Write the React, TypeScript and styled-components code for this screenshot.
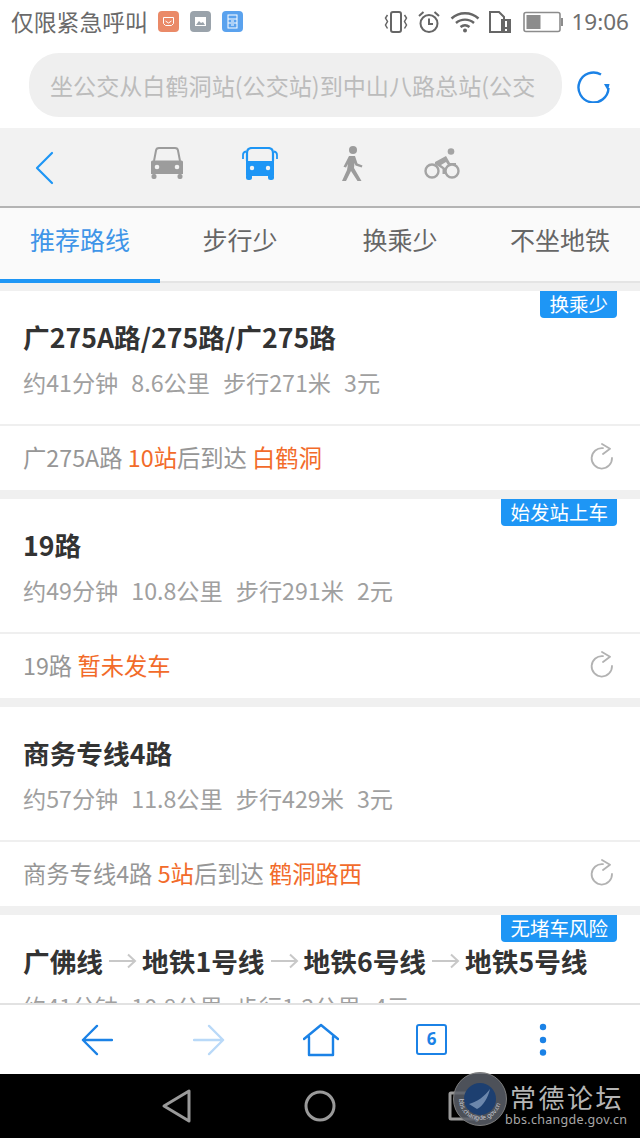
import styled, { createGlobalStyle } from "styled-components";

const GlobalStyle = createGlobalStyle`
  html, body { margin: 0; padding: 0; background: #fff; }
  body { font-family: "Noto Sans CJK SC", "Noto Sans", sans-serif; }
  * { box-sizing: border-box; }
`;

const BLUE = "#1e96f5";
const ORANGE = "#f26b2a";

const Page = styled.div`
  width: 640px;
  height: 1138px;
  display: flex;
  flex-direction: column;
  overflow: hidden;
`;

const StatusBar = styled.div`
  height: 46px;
  flex: none;
  display: flex;
  align-items: center;
  padding: 0 11px 3px 11px;
  color: #6a6a6a;
`;

const StatusText = styled.span`
  font-size: 22.8px;
  line-height: 30px;
  white-space: nowrap;
`;

const Notes = styled.div`
  display: flex;
  gap: 11px;
  margin-left: 10px;
  flex: 1;
`;

const NoteIcon = styled.div<{ $bg: string }>`
  width: 21px;
  height: 21px;
  border-radius: 4px;
  background: ${(p) => p.$bg};
  display: flex;
  align-items: center;
  justify-content: center;
`;

const StatusIcons = styled.div`
  display: flex;
  align-items: center;
  gap: 9px;
`;

const Clock = styled.span`
  font-family: "Noto Sans", sans-serif;
  font-size: 22.5px;
  line-height: 30px;
  color: #6e6e6e;
  margin-left: -2px;
`;

const SearchRow = styled.div`
  height: 82px;
  flex: none;
  display: flex;
  align-items: flex-start;
  padding: 7px 0 0 29px;
  background: #fff;
`;

const SearchBox = styled.div`
  width: 533px;
  height: 64px;
  border-radius: 30px;
  background: #efefef;
  color: #bcbcbc;
  font-size: 23.1px;
  line-height: 64px;
  padding-left: 21px;
  white-space: nowrap;
  overflow: hidden;
`;

const RefreshWrap = styled.div`
  margin: 16px 0 0 15px;
  width: 34px;
  height: 34px;
`;

const ModeBar = styled.div`
  height: 80px;
  flex: none;
  background: #f2f2f2;
  border-bottom: 2px solid #b4b4b4;
  display: flex;
  align-items: center;
`;

const BackSlot = styled.div`
  width: 120px;
  flex: none;
  padding: 2px 0 0 34px;
  display: flex;
`;

const ModeSlot = styled.div<{ $w: number }>`
  width: ${(p) => p.$w}px;
  flex: none;
  display: flex;
  justify-content: center;
  padding-bottom: 6px;
`;

const Tabs = styled.div`
  height: 75px;
  flex: none;
  display: flex;
  background: #fafafa;
  border-bottom: 2px solid #e4e4e4;
`;

const Tab = styled.div<{ $active?: boolean }>`
  width: 160px;
  height: 75px;
  text-align: center;
  font-size: 25px;
  line-height: 62px;
  color: ${(p) => (p.$active ? "#3f95e8" : "#666")};
  border-bottom: 4px solid ${(p) => (p.$active ? BLUE : "transparent")};
`;

const List = styled.div`
  flex: 1;
  min-height: 0;
  overflow: hidden;
  background: #f0f0f0;
  padding-top: 8px;
  display: flex;
  flex-direction: column;
  gap: 9px;
`;

const Card = styled.div`
  flex: none;
  height: 199px;
  background: #fff;
  position: relative;
`;

const Badge = styled.div`
  position: absolute;
  top: 0;
  right: 23px;
  height: 27px;
  padding: 0 9px;
  background: ${BLUE};
  color: #fff;
  font-size: 19.5px;
  line-height: 25px;
  border-radius: 0 0 4px 4px;
`;

const CardMain = styled.div`
  height: 135px;
  padding: 27px 0 0 23px;
  border-bottom: 2px solid #efefef;
`;

const Title = styled.div`
  display: flex;
  align-items: center;
  height: 38px;
  font-size: 26.7px;
  line-height: 38px;
  font-weight: 700;
  color: #333;
  white-space: nowrap;
`;

const Meta = styled.div`
  display: flex;
  gap: 13px;
  margin-top: 10px;
  font-size: 23.2px;
  line-height: 32px;
  color: #a0a0a0;
  white-space: nowrap;
`;

const Arrow = styled.span`
  display: flex;
  width: 39px;
  justify-content: center;
`;

const CardFoot = styled.div`
  height: 64px;
  display: flex;
  align-items: center;
  justify-content: space-between;
  padding: 0 26px 3px 23px;
  font-size: 23.3px;
  color: #969696;
  white-space: nowrap;
`;

const Hot = styled.span`
  color: ${ORANGE};
`;

const BottomBar = styled.div`
  height: 71px;
  flex: none;
  background: #fff;
  border-top: 2px solid #e2e2e2;
  display: flex;
  align-items: center;
  padding-left: 41px;
`;

const BottomSlot = styled.div<{ $w: number }>`
  width: ${(p) => p.$w}px;
  flex: none;
  display: flex;
  justify-content: center;
`;

const TabCount = styled.div`
  width: 31px;
  height: 31px;
  border: 2.5px solid #1b82e6;
  border-radius: 3px;
  color: #1b82e6;
  font-size: 17px;
  font-weight: 700;
  line-height: 26px;
  text-align: center;
  font-family: "Noto Sans", sans-serif;
`;

const NavBar = styled.div`
  height: 64px;
  flex: none;
  background: #000;
  position: relative;
  display: flex;
  align-items: center;
  padding-left: 161px;
`;

const Watermark = styled.div`
  position: absolute;
  left: 453px;
  top: -2px;
  width: 187px;
  height: 58px;
`;

const Seal = styled.div`
  position: absolute;
  left: 0;
  top: 0;
  width: 54px;
  height: 54px;
`;

const WmTitle = styled.div`
  position: absolute;
  left: 57px;
  top: 10px;
  font-family: "Noto Sans CJK SC", serif;
  font-size: 26px;
  line-height: 29px;
  letter-spacing: 2.5px;
  color: #b5b5b5;
  white-space: nowrap;
`;

const WmUrl = styled.div`
  position: absolute;
  left: 52px;
  top: 40px;
  font-family: "Noto Sans", sans-serif;
  font-size: 12.5px;
  line-height: 16px;
  letter-spacing: 0.3px;
  color: #a8a8a8;
  white-space: nowrap;
`;

const Share = () => (
  <svg width="24" height="27" viewBox="0 0 24 27" fill="none" stroke="#b2b2b2" strokeWidth="1.8">
    <path d="M13 5.2 A 10.200 10.200 0 1 0 22 15" strokeLinecap="round" />
    <path d="M12 1L20 5.800L13 11" strokeLinecap="round" strokeLinejoin="round" />
  </svg>
);

const FlowArrow = () => (
  <svg width="29" height="16" viewBox="0 0 29 16" fill="none" stroke="#c8c8c8" strokeWidth="2">
    <path d="M1 8H27M20 1.500L27 8L20 14.500" />
  </svg>
);

const routes = [
  {
    badge: "换乘少",
    title: ["广275A路/275路/广275路"],
    meta: ["约41分钟", "8.6公里", "步行271米", "3元"],
    foot: (
      <>
        广275A路 <Hot>10站</Hot>后到达 <Hot>白鹤洞</Hot>
      </>
    ),
  },
  {
    badge: "始发站上车",
    title: ["19路"],
    meta: ["约49分钟", "10.8公里", "步行291米", "2元"],
    foot: (
      <>
        19路 <Hot>暂未发车</Hot>
      </>
    ),
  },
  {
    title: ["商务专线4路"],
    meta: ["约57分钟", "11.8公里", "步行429米", "3元"],
    foot: (
      <>
        商务专线4路 <Hot>5站</Hot>后到达 <Hot>鹤洞路西</Hot>
      </>
    ),
  },
  {
    badge: "无堵车风险",
    title: ["广佛线", "地铁1号线", "地铁6号线", "地铁5号线"],
    meta: ["约41分钟", "10.8公里", "步行1.2公里", "4元"],
    foot: null,
  },
];

export default function App() {
  return (
    <Page>
      <GlobalStyle />
      <StatusBar>
        <StatusText>仅限紧急呼叫</StatusText>
        <Notes>
          <NoteIcon $bg="#ea8a68">
            <svg width="13" height="13" viewBox="0 0 13 13" fill="none" stroke="#fff" strokeWidth="1">
              <path d="M1.500 2.500h10v6l-2 2h-6l-2-2zM3.500 6l3 2 3-2" />
            </svg>
          </NoteIcon>
          <NoteIcon $bg="#9aa3ab">
            <svg width="13" height="13" viewBox="0 0 13 13">
              <rect x="1" y="2" width="11" height="9" fill="#fff" />
              <path d="M2 10l3-4 2 2 2-1 2 3z" fill="#9aa3ab" />
            </svg>
          </NoteIcon>
          <NoteIcon $bg="#5aa2ee">
            <svg width="11" height="15" viewBox="0 0 11 15" fill="none" stroke="#fff" strokeWidth="1">
              <rect x="1" y="1" width="9" height="13" />
              <path d="M1 5h9M1 9h9M4 7h3M4 11h3" />
            </svg>
          </NoteIcon>
        </Notes>
        <StatusIcons>
          <svg width="24" height="24" viewBox="0 0 24 24" fill="none" stroke="#666" strokeWidth="1.800">
            <rect x="7" y="2" width="10" height="20" rx="2" strokeWidth="2" />
            <path d="M3.500 5l-2 3 2 3.500-2 3.500 2 3.500M20.500 5l2 3-2 3.500 2 3.500-2 3.500" strokeWidth="1.500" />
          </svg>
          <svg width="24" height="24" viewBox="0 0 24 24" fill="none" stroke="#666" strokeWidth="2">
            <circle cx="12" cy="13.500" r="8.500" />
            <path d="M12 8.500v5.500h4M2 6l4.500-4M22 6l-4.500-4" />
          </svg>
          <svg width="30" height="22" viewBox="0 0 30 22" fill="none" stroke="#666" strokeWidth="2.400">
            <path d="M1.500 7.500C9 .5 21 .5 28.500 7.500M6 12c5-4.500 13-4.500 18 0M10.500 16c2.700-2.200 6.300-2.200 9 0" />
            <circle cx="15" cy="19.500" r="2" fill="#666" stroke="none" />
          </svg>
          <svg width="22" height="24" viewBox="0 0 22 24">
            <path d="M1 2h9l5 5v15H1z" fill="none" stroke="#666" strokeWidth="2" />
            <rect x="12" y="9" width="10" height="14" fill="#666" />
            <rect x="16" y="11" width="2" height="6" fill="#fff" />
            <rect x="16" y="19" width="2" height="2" fill="#fff" />
          </svg>
          <svg width="41" height="22" viewBox="0 0 41 22" style={{ marginLeft: 3 }}>
            <rect x="1" y="1.500" width="36" height="19" rx="2" fill="none" stroke="#8c8c8c" strokeWidth="1.600" />
            <rect x="3.500" y="4" width="14" height="14" fill="#8c8c8c" />
            <rect x="38" y="7" width="2" height="8" fill="#8c8c8c" />
          </svg>
          <Clock>19:06</Clock>
        </StatusIcons>
      </StatusBar>

      <SearchRow>
        <SearchBox>坐公交从白鹤洞站(公交站)到中山八路总站(公交</SearchBox>
        <RefreshWrap>
          <svg width="34" height="34" viewBox="0 0 34 34" fill="none">
            <path d="M24 5.500 A 15 15 0 1 0 31.500 19" stroke="#1b82e6" strokeWidth="2.400" />
            <path d="M27 15l5.500 0-1.500 7z" fill="#1b82e6" />
          </svg>
        </RefreshWrap>
      </SearchRow>

      <ModeBar>
        <BackSlot>
          <svg width="20" height="34" viewBox="0 0 20 34" fill="none" stroke={BLUE} strokeWidth="2.200">
            <path d="M18 2L3 17L18 32" strokeLinecap="round" strokeLinejoin="round" />
          </svg>
        </BackSlot>
        <ModeSlot $w={94}>
          <svg width="34" height="34" viewBox="0 0 34 34">
            <path d="M4 14L6 3.500Q6.300 1 9 1H25Q27.700 1 28 3.500L30 14" fill="none" stroke="#9c9c9c" strokeWidth="2" />
            <path d="M2.500 13.500H31.500Q33 13.500 33 15V27H1V15Q1 13.500 2.500 13.500Z" fill="#9c9c9c" />
            <rect x="1.500" y="27" width="5" height="5" rx="2" fill="#9c9c9c" />
            <rect x="27.500" y="27" width="5" height="5" rx="2" fill="#9c9c9c" />
            <circle cx="7" cy="20" r="2.300" fill="#f2f2f2" />
            <circle cx="27" cy="20" r="2.300" fill="#f2f2f2" />
          </svg>
        </ModeSlot>
        <ModeSlot $w={92}>
          <svg width="36" height="34" viewBox="0 0 36 34">
            <path d="M1 12V8Q1 5 4 4.500M35 12V8Q35 5 32 4.500" fill="none" stroke={BLUE} strokeWidth="1.800" />
            <path d="M5 14V6Q5 1 10 1H26Q31 1 31 6V14" fill="none" stroke={BLUE} strokeWidth="2.200" />
            <path d="M4 14H32V28Q32 29 31 29H5Q4 29 4 28Z" fill={BLUE} />
            <rect x="4" y="27" width="6" height="6" rx="2.500" fill={BLUE} />
            <rect x="26" y="27" width="6" height="6" rx="2.500" fill={BLUE} />
            <circle cx="10" cy="21" r="2.200" fill="#f2f2f2" />
            <circle cx="26" cy="21" r="2.200" fill="#f2f2f2" />
          </svg>
        </ModeSlot>
        <ModeSlot $w={94}>
          <svg width="22" height="36" viewBox="0 0 22 36">
            <circle cx="11" cy="4" r="4" fill="#9c9c9c" />
            <path d="M7 10h6l2.500 7.500 5 2-.8 2-6.200-2-1-2.500-.5 5 7.500 13h-4l-6.500-10L4 35H0l5-11 1-6-2 3.500-2.500-.8z" fill="#9c9c9c" />
          </svg>
        </ModeSlot>
        <ModeSlot $w={84}>
          <svg width="36" height="32" viewBox="0 0 36 32">
            <circle cx="27" cy="3.500" r="3.300" fill="#a4a4a4" />
            <circle cx="8" cy="23" r="6.500" fill="none" stroke="#a4a4a4" strokeWidth="2.400" />
            <circle cx="28" cy="23" r="6.500" fill="none" stroke="#a4a4a4" strokeWidth="2.400" />
            <path d="M11 14l11-6 4 7h6v2h-8l-2-3-5 3 4 3v6h-2.500v-5L11 16z" fill="#a4a4a4" />
          </svg>
        </ModeSlot>
      </ModeBar>

      <Tabs>
        <Tab $active>推荐路线</Tab>
        <Tab>步行少</Tab>
        <Tab>换乘少</Tab>
        <Tab>不坐地铁</Tab>
      </Tabs>

      <List>
        {routes.map((r) => (
          <Card key={r.title.join()}>
            {r.badge && <Badge>{r.badge}</Badge>}
            <CardMain>
              <Title>
                {r.title.map((t, i) => (
                  <span key={t} style={{ display: "contents" }}>
                    {i > 0 && (
                      <Arrow>
                        <FlowArrow />
                      </Arrow>
                    )}
                    {t}
                  </span>
                ))}
              </Title>
              <Meta>
                {r.meta.map((m) => (
                  <span key={m}>{m}</span>
                ))}
              </Meta>
            </CardMain>
            {r.foot && (
              <CardFoot>
                <span>{r.foot}</span>
                <Share />
              </CardFoot>
            )}
          </Card>
        ))}
      </List>

      <BottomBar>
        <BottomSlot $w={112}>
          <svg width="32" height="32" viewBox="0 0 34 34" fill="none" stroke="#1b82e6" strokeWidth="2.400">
            <path d="M33 17H2M17 2L2 17L17 32" strokeLinejoin="round" strokeLinecap="round" />
          </svg>
        </BottomSlot>
        <BottomSlot $w={112}>
          <svg width="32" height="32" viewBox="0 0 34 34" fill="none" stroke="#b9d9f8" strokeWidth="2.400">
            <path d="M1 17H32M17 2L32 17L17 32" strokeLinejoin="round" strokeLinecap="round" />
          </svg>
        </BottomSlot>
        <BottomSlot $w={111}>
          <svg width="36" height="34" viewBox="0 0 36 34" fill="none" stroke="#1b82e6" strokeWidth="2.400">
            <path d="M1 16L18 2L35 16M6 14V32H30V14" strokeLinejoin="round" strokeLinecap="round" />
          </svg>
        </BottomSlot>
        <BottomSlot $w={111}>
          <TabCount>6</TabCount>
        </BottomSlot>
        <BottomSlot $w={111}>
          <svg width="8" height="34" viewBox="0 0 8 34" fill="#1b82e6">
            <circle cx="4" cy="4" r="3.200" />
            <circle cx="4" cy="17" r="3.200" />
            <circle cx="4" cy="29.500" r="3.200" />
          </svg>
        </BottomSlot>
      </BottomBar>

      <NavBar>
        <svg width="32" height="36" viewBox="0 0 32 36" fill="none" stroke="#9a9a9a" strokeWidth="3">
          <path d="M28 3V33L3 18Z" strokeLinejoin="round" />
        </svg>
        <svg width="32" height="32" viewBox="0 0 32 32" fill="none" stroke="#9a9a9a" strokeWidth="3" style={{ marginLeft: 111 }}>
          <circle cx="16" cy="16" r="14" />
        </svg>
        <svg width="30" height="30" viewBox="0 0 30 30" fill="none" stroke="#9a9a9a" strokeWidth="3" style={{ marginLeft: 112 }}>
          <rect x="2" y="2" width="26" height="26" rx="1" />
        </svg>
        <Watermark>
          <Seal>
            <svg width="54" height="54" viewBox="0 0 54 54">
              <defs>
                <path id="sealRing" d="M6 27a21 21 0 1 0 42 0a21 21 0 1 0-42 0" />
              </defs>
              <circle cx="27" cy="27" r="26.500" fill="#5a5f68" fillOpacity="0.85" stroke="#7d7d7d" strokeWidth="1" />
              <circle cx="27" cy="27" r="16" fill="#1d3f70" />
              <path d="M16 32C24 30 32 24 37 17C35 26 30 34 24 37Z" fill="#8fa7c6" fillOpacity="0.7" />
              <text fontSize="6.500" fill="#c4c8d0" fontFamily="Noto Sans, sans-serif">
                <textPath href="#sealRing">bbs.changde.gov.cn</textPath>
              </text>
            </svg>
          </Seal>
          <WmTitle>常德论坛</WmTitle>
          <WmUrl>bbs.changde.gov.cn</WmUrl>
        </Watermark>
      </NavBar>
    </Page>
  );
}
